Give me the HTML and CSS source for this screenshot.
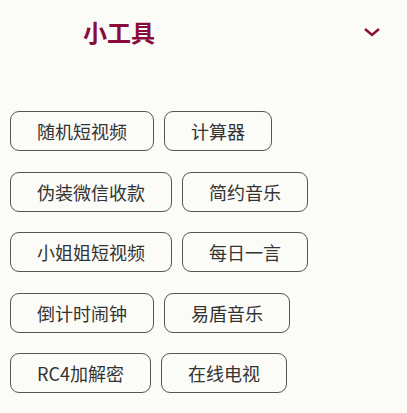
FILE: index.html
```html
<!DOCTYPE html>
<html lang="zh-CN">

<head>
    <meta charset="UTF-8" />
    <meta name="viewport" content="width=device-width, initial-scale=1.0" />
    <title>小工具</title>
    <link rel="stylesheet" href="styles.css">
</head>

<body>
    <div class="header">
        <h2 class="title">小工具</h2>
        <svg class="arrow" width="18" height="10" viewBox="0 0 18 10">
            <path d="M2 2 L9 8 L16 2" fill="none" stroke="#8a0c3c" stroke-width="2.4" />
        </svg>
    </div>
    <div class="tools">
        <button class="tool">随机短视频</button>
        <button class="tool">计算器</button>
        <button class="tool">伪装微信收款</button>
        <button class="tool">简约音乐</button>
        <button class="tool">小姐姐短视频</button>
        <button class="tool">每日一言</button>
        <button class="tool">倒计时闹钟</button>
        <button class="tool">易盾音乐</button>
        <button class="tool">RC4加解密</button>
        <button class="tool">在线电视</button>
    </div>
</body>

</html>
```

FILE: styles.css
```css
body {
    margin: 0;
    background: #fbfbf7;
    font-family: "Noto Sans CJK SC", "Noto Sans", sans-serif;
}

.header {
    display: flex;
    align-items: center;
    justify-content: space-between;
    height: 63px;
    padding: 0 26px 0 83px;
}

.title {
    margin: 0;
    font-size: 24px;
    font-weight: bold;
    color: #8a0c3c;
}

.arrow {
    display: block;
}

.tools {
    display: flex;
    flex-wrap: wrap;
    gap: 20.5px 10px;
    padding: 48px 10px 0;
}

.tool {
    box-sizing: border-box;
    height: 40px;
    padding: 0 26px;
    border: 1px solid #555;
    border-radius: 9px;
    background: transparent;
    font-family: "Noto Sans CJK SC", "Noto Sans", sans-serif;
    font-size: 18px;
    line-height: 38px;
    color: #333;
}
```
